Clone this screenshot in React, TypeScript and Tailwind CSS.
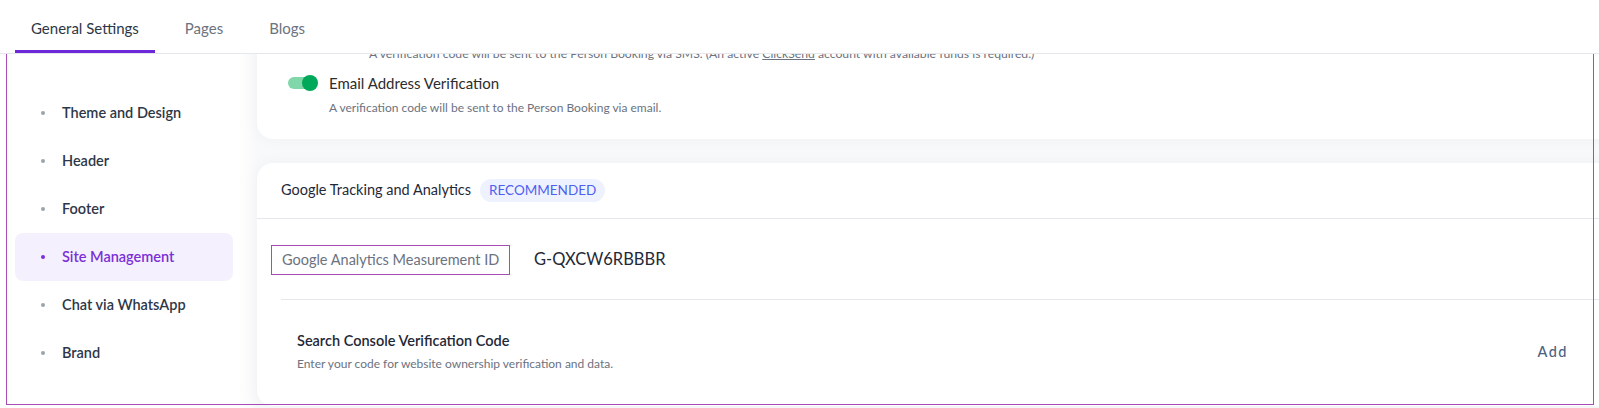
import React from "react";

const sideItems = [
  "Theme and Design",
  "Header",
  "Footer",
  "Site Management",
  "Chat via WhatsApp",
  "Brand",
];

const tabs = ["General Settings", "Pages", "Blogs"];

const App = () => {
  const active = "Site Management";

  return (
    <div className="relative h-[408px] w-full overflow-hidden bg-white font-['Lato',sans-serif]">
      {/* Tab bar */}
      <div className="relative z-10 flex h-[54px] items-stretch border-b border-[#e5e7eb] bg-white pl-[15px]">
        {tabs.map((t, i) => (
          <div
            key={t}
            className={
              i === 0
                ? "flex items-center border-b-[3px] border-[#6d28d9] px-[16px] pt-[7px] text-[15px] text-[#2d3748]"
                : "ml-[14px] flex items-center px-[16px] pt-[4px] text-[15px] text-[#6b7280]"
            }
          >
            {t}
          </div>
        ))}
      </div>

      <div className="flex h-[354px]">
        {/* Sidebar */}
        <div className="w-[237px] shrink-0 pl-[15px] pr-[4px] pt-[35px]">
          {sideItems.map((item) => (
            <div
              key={item}
              className={
                item === active
                  ? "flex h-[48px] items-center rounded-[8px] bg-[#f5f0fd] pl-[26px] text-[14.5px] font-semibold text-[#7b2fd6]"
                  : "flex h-[48px] items-center pl-[26px] text-[14.5px] font-semibold text-[#2d3748]"
              }
            >
              <span
                className={
                  item === active
                    ? "mr-[17px] h-[4px] w-[4px] rounded-full bg-[#7b2fd6]"
                    : "mr-[17px] h-[4px] w-[4px] rounded-full bg-[#9ca3af]"
                }
              />
              {item}
            </div>
          ))}
        </div>

        {/* Main */}
        <div className="min-w-0 flex-1 overflow-hidden bg-[linear-gradient(to_right,#ffffff,#f8f9fa_20px)] pl-[20px]">
          <div className="mr-[-24px]">
            {/* Card 1 (scrolled, top clipped) */}
            <div className="mt-[-40px] rounded-[16px] bg-white pl-[31px] pt-[32px] pb-[23px] shadow-[0_0_18px_rgba(0,0,0,0.04)]">
              <div className="pl-[81px] text-[12.2px] leading-[16px] text-[#6b7280]">
                A verification code will be sent to the Person Booking via SMS. (An active{" "}
                <span className="underline">ClickSend</span> account with available funds is required.)
              </div>
              <div className="mt-[10px] flex items-center">
                <div className="relative h-[16px] w-[30px]">
                  <div className="absolute left-0 top-[2px] h-[12px] w-[24px] rounded-full bg-[#80d7aa]" />
                  <div className="absolute right-0 top-0 h-[16px] w-[16px] rounded-full bg-[#00a859]" />
                </div>
                <div className="ml-[11px] text-[15px] text-[#2d2d2d]">Email Address Verification</div>
              </div>
              <div className="mt-[5px] pl-[41px] text-[12px] leading-[16px] text-[#6b7280]">
                A verification code will be sent to the Person Booking via email.
              </div>
            </div>

            {/* Card 2 */}
            <div className="mt-[24px] rounded-[16px] bg-white pb-[33px] shadow-[0_0_18px_rgba(0,0,0,0.04)]">
              <div className="flex h-[56px] items-center border-b border-[#e5e7eb] pl-[24px]">
                <span className="text-[14.5px] text-[#1f2937]">Google Tracking and Analytics</span>
                <span className="ml-[9px] flex h-[23px] items-center rounded-full bg-[#eef2ff] px-[9px] text-[13.5px] text-[#4f5ff0]">
                  RECOMMENDED
                </span>
              </div>
              <div className="mx-[24px] flex h-[81px] items-center border-b border-[#e5e7eb] pt-[2px]">
                <div className="ml-[-10px] flex h-[30px] w-[239px] items-center border border-[#a64db5] pl-[10px] text-[14.5px] text-[#6b7280]">
                  Google Analytics Measurement ID
                </div>
                <div className="ml-[24px] text-[16.5px] text-[#1f2937]">G-QXCW6RBBBR</div>
              </div>
              <div className="ml-[40px] mr-[55px] flex items-center pt-[30px]">
                <div className="flex-1">
                  <div className="text-[14.5px] font-semibold text-[#1f2937]">Search Console Verification Code</div>
                  <div className="mt-[4px] text-[12px] text-[#6b7280]">
                    Enter your code for website ownership verification and data.
                  </div>
                </div>
                <div className="text-[14.5px] font-medium tracking-[1.5px] text-[#4a6382]">Add</div>
              </div>
            </div>
          </div>
        </div>
      </div>

      {/* annotation outline */}
      <div className="pointer-events-none absolute left-[6px] top-[5px] h-[400px] w-[1588px] border border-[#a64db5]" />
    </div>
  );
};

export default App;
